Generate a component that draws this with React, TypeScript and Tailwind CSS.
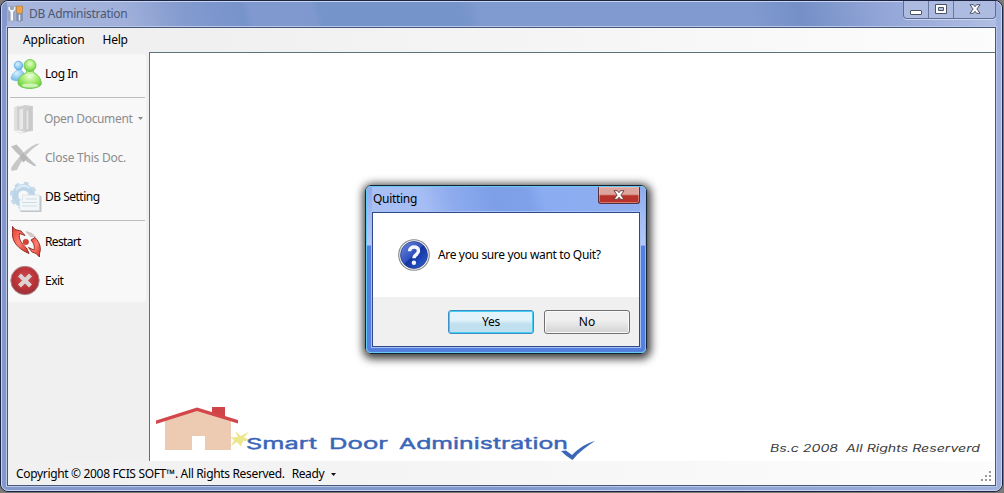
import type { ReactNode } from "react";

function AppIcon() {
  return (
    <svg width="17" height="17" viewBox="0 0 17 17" className="shrink-0">
      <path d="M.5 1h8v15h-8z" fill="#8d99b5" opacity=".55" />
      <path d="M9 1h7v15H9z" fill="#6f83b0" opacity=".6" />
      <path d="M1 1v3.500L3.200 7v9h3.300V7L8.700 4.500V1L6.500 2v2.500h-3V2z" fill="#f6f8fb" stroke="#8690a8" strokeWidth=".6" />
      <path d="M9.500 1h6v6l-2 2h-2l-2-2z" fill="#f0a244" stroke="#b07a3c" strokeWidth=".6" />
      <path d="M11.200 9h2.600v7h-2.600z" fill="#e8edf6" stroke="#56657f" strokeWidth=".6" />
    </svg>
  );
}

function UsersIcon() {
  return (
    <svg width="32" height="32" viewBox="0 0 32 32">
      <defs>
        <radialGradient id="green" cx=".5" cy=".35" r=".7">
          <stop offset="0" stopColor="#e8fdd0" />
          <stop offset=".5" stopColor="#a4ea70" />
          <stop offset="1" stopColor="#62c93a" />
        </radialGradient>
        <radialGradient id="sky" cx=".4" cy=".35" r=".75">
          <stop offset="0" stopColor="#d8f1ff" />
          <stop offset="1" stopColor="#5aaee4" />
        </radialGradient>
      </defs>
      <path d="M1 21c0-4 2-6 5-8l1-2h4l1 2c2 1 3 4 3 8-4 2-10 3-14 0z" fill="url(#sky)" stroke="#7dbde6" strokeWidth=".6" />
      <circle cx="8.500" cy="7.500" r="4.300" fill="url(#sky)" stroke="#4a9ad6" strokeWidth=".6" />
      <path d="M8 26c0-6 3-9 8-11l1-3h6l1 3c5 2 7 6 7.500 11-3 6-20.500 6-23.500 0z" fill="url(#green)" stroke="#5fbe3b" strokeWidth=".7" />
      <path d="M15 16l5 5 5-5z" fill="#e4fcd0" opacity=".7" />
      <circle cx="20" cy="7.500" r="6" fill="url(#green)" stroke="#5cc038" strokeWidth=".7" />
      <ellipse cx="20" cy="27.500" rx="8.500" ry="2" fill="#eaffd8" opacity=".7" />
    </svg>
  );
}

function FolderIcon() {
  return (
    <svg width="32" height="32" viewBox="0 0 32 32">
      <path d="M4 4.500 9 2v25l-5 1z" fill="#e0e0e0" />
      <path d="M7 4l8-2 8 1v25l-8 1-8-2z" fill="#d0d0d0" />
      <path d="M9.500 7l3.500-1.500V26l-3.500 1z" fill="#e9e9e9" />
      <path d="M15 7l7-4v24l-7 2z" fill="#cacaca" />
      <path d="M16.500 8l1.800-1v19l-1.800.8z" fill="#e8e8e8" />
      <path d="M4 27.500l7 2 5-1v1.500l-6 .5z" fill="#e2e2e2" />
    </svg>
  );
}

function CrossIcon() {
  return (
    <svg width="32" height="32" viewBox="0 0 32 32">
      <path d="M1 4.500 6.500 2.500c5 5 11 13 20 21l-2.500.500C15 19 7 12 1 4.500z" fill="#c0c0c0" />
      <path d="M30 1.500C20 8 13 15 7 28l-5.500 1-.5-3C8 15 17 6 26 2z" fill="#c8c8c8" />
      <path d="M13 11l4.500 5-4 4.500-4-5z" fill="#b6b6b6" />
    </svg>
  );
}

function SettingIcon() {
  return (
    <svg width="32" height="32" viewBox="0 0 32 32">
      <circle cx="13.500" cy="14.500" r="8.600" fill="none" stroke="#bcd5e8" strokeWidth="6" />
      <circle cx="13.500" cy="14.500" r="12" fill="none" stroke="#c3daeb" strokeWidth="3.400" strokeDasharray="4.700 4.720" />
      <circle cx="13.500" cy="14.500" r="5.500" fill="#f6f8fa" stroke="#a5c3da" strokeWidth=".6" />
      <path d="M6 9c4-5 9-5 14-2" stroke="#dcebf5" strokeWidth="2" fill="none" />
      <path d="M14 15h17.500v16H10.500V21H14z" fill="#c0c7cb" />
      <path d="M12.500 14h17v15.500h-20V19h3z" fill="#f2f6f8" stroke="#d0dae1" strokeWidth=".6" />
      <path d="M16 18h11M12 21.500h15M12 25h15" stroke="#cfdce5" strokeWidth="1" />
    </svg>
  );
}

function RestartIcon() {
  return (
    <svg width="32" height="32" viewBox="0 0 32 32">
      <defs>
        <linearGradient id="red" x1="0" y1="0" x2="1" y2="1">
          <stop offset="0" stopColor="#e6382c" />
          <stop offset=".5" stopColor="#ff8070" />
          <stop offset="1" stopColor="#d42a20" />
        </linearGradient>
      </defs>
      <path d="M2.500.5 5 3.500l6 1.500 4 4.500-5.500-2C8.500 13 11 17 16.500 22l2.500 5.500C9 23.500 1.500 16 2.500 6.500z" fill="url(#red)" stroke="#7b1512" strokeWidth=".8" />
      <path d="M25 11.500c5 5 6.500 11 4.500 16V31l-3.500-3.500-4-1.500-3.500-4.500 5.500 2.500c1-4-.5-7-3-10z" fill="url(#red)" stroke="#7b1512" strokeWidth=".8" />
      <path d="M16 5.500l6 2 3.500 3.500-5-.5z" fill="#dccdca" stroke="#a78c88" strokeWidth=".4" />
      <circle cx="15.800" cy="16" r="2.800" fill="#dc4234" stroke="#a03026" strokeWidth=".5" />
    </svg>
  );
}

function ExitIcon() {
  return (
    <svg width="32" height="32" viewBox="0 0 32 32">
      <defs>
        <radialGradient id="exit" cx=".5" cy=".4" r=".6">
          <stop offset="0" stopColor="#cf4a4e" />
          <stop offset=".65" stopColor="#b83238" />
          <stop offset="1" stopColor="#93343a" />
        </radialGradient>
      </defs>
      <circle cx="15" cy="15.500" r="14.200" fill="url(#exit)" stroke="#b58a8c" strokeWidth="1" />
      <path d="M9.500 10l11 11M20.500 10l-11 11" stroke="#dcd3d3" strokeWidth="4.200" />
    </svg>
  );
}

function QuestionIcon() {
  return (
    <svg width="32" height="32" viewBox="0 0 32 32" className="shrink-0">
      <defs>
        <linearGradient id="ask" x1="0" y1="0" x2="1" y2="1">
          <stop offset="0" stopColor="#6e8be0" />
          <stop offset=".48" stopColor="#2f50bd" />
          <stop offset=".5" stopColor="#1334a0" />
          <stop offset="1" stopColor="#2f62d6" />
        </linearGradient>
      </defs>
      <circle cx="16" cy="16" r="15.300" fill="#f2f2f2" stroke="#85888f" strokeWidth="1.100" />
      <circle cx="16" cy="16" r="13.500" fill="url(#ask)" stroke="#26377f" strokeWidth=".7" />
      <path d="M11.500 12.200C11.700 6.500 20.500 6.800 20.500 11.800c0 3.800-4.600 3.700-4.600 7.500" stroke="#f4f6fb" strokeWidth="3.500" fill="none" />
      <circle cx="15.900" cy="23.700" r="2.200" fill="#f4f6fb" />
    </svg>
  );
}

function CloseGlyph({ edge }: { edge: string }) {
  return (
    <svg width="12" height="10" viewBox="0 0 12 10">
      <path d="M1 .7h3.400L6 2.700 7.600.7H11L7.900 5 11 9.300H7.600L6 7.300l-1.600 2H1L4.100 5z" fill="#fff" stroke={edge} strokeWidth="1" />
    </svg>
  );
}

function Caret({ color }: { color: string }) {
  return (
    <svg width="5" height="3" viewBox="0 0 5 3" className="shrink-0">
      <path d="M0 0h5L2.500 3z" fill={color} />
    </svg>
  );
}

function ToolRow({ icon, children }: { icon: ReactNode; children: ReactNode }) {
  return (
    <div className="flex h-[39px] items-center pl-[2px] whitespace-nowrap">
      <span className="w-[34px] shrink-0">{icon}</span>
      {children}
    </div>
  );
}

function Separator() {
  return (
    <div className="h-[6px] pt-[4px] pl-[2px]">
      <div className="h-px w-[135px] bg-[#bdbdbd]" />
    </div>
  );
}

function Sidebar() {
  return (
    <aside className="w-[141px] shrink-0 pt-[2px]">
      <div className="h-[248px] w-[138px] rounded-r-[3px] bg-[#f8f8f8]">
        <ToolRow icon={<UsersIcon />}><span className="pl-px tracking-[-0.45px]">Log In</span></ToolRow>
        <Separator />
        <ToolRow icon={<FolderIcon />}>
          <span className="mr-[6px] tracking-[-0.35px] text-[#8c8c8c]">Open Document</span>
          <Caret color="#8c8c8c" />
        </ToolRow>
        <ToolRow icon={<CrossIcon />}><span className="pl-px tracking-[-0.25px] text-[#8c8c8c]">Close This Doc.</span></ToolRow>
        <ToolRow icon={<SettingIcon />}><span className="pl-px tracking-[-0.5px]">DB Setting</span></ToolRow>
        <Separator />
        <ToolRow icon={<RestartIcon />}><span className="pl-px tracking-[-0.65px]">Restart</span></ToolRow>
        <ToolRow icon={<ExitIcon />}><span className="pl-px tracking-[-0.5px]">Exit</span></ToolRow>
      </div>
    </aside>
  );
}

function Brand() {
  return (
    <svg width="450" height="60" viewBox="155 401 450 60">
      <path d="M165 419l32-9 34 9v31h-26v-14h-13v14h-27z" fill="#eccbb2" />
      <path d="M212 407h13v12l-13-4z" fill="#cf4449" />
      <path d="M156 420.500 197 407.500l41 12.500v3.500L197 411 156 424z" fill="#d3474b" />
      <path d="M230 437.500l8-.5-3-6 6 5 8-4.500-5 6 7 3-8 .5-2 5.500-4-4.500-6 4 3-6z" fill="#ece78c" />
      <g fontFamily="Inter, sans-serif" fontSize="15" fill="#3a66b8" stroke="#3a66b8" strokeWidth=".4">
        <text x="246" y="448.500" textLength="71" lengthAdjust="spacingAndGlyphs">Smart</text>
        <text x="329" y="448.500" textLength="59" lengthAdjust="spacingAndGlyphs">Door</text>
        <text x="399" y="448.500" textLength="169" lengthAdjust="spacingAndGlyphs">Administration</text>
      </g>
      <path d="M561 451l5-.5 6 4.500c7-7 14-11.500 23-14-8 5-16 11-22.500 19-4-2.500-8-5.500-11.500-9z" fill="#3a66b8" />
    </svg>
  );
}

function Rights() {
  return (
    <svg width="216" height="16" viewBox="768 441 216 16">
      <text x="770" y="451.500" fontFamily="Inter, sans-serif" fontStyle="italic" fontSize="10.300" fill="#3c3c3c" textLength="210" lengthAdjust="spacingAndGlyphs">
        {"Bs.c 2008 \u00a0All Rights Reserverd"}
      </text>
    </svg>
  );
}

function WindowControls() {
  return (
    <div className="-mt-px flex h-[18px] w-[93px] rounded-b-[4px] border border-t-0 border-[#5f6c93] bg-[#adbbe0] shadow-[0_1px_0_#c9d4ee]">
      <div className="flex w-[25px] items-end justify-center border-r border-[#6a789e] pb-[3px]">
        <div className="h-[5px] w-[12px] rounded-[1px] border border-[#4d5263] bg-white" />
      </div>
      <div className="flex w-[25px] items-center justify-center border-r border-[#6a789e] pb-[2px]">
        <svg width="12" height="10" viewBox="0 0 12 10">
          <path d="M.5.500h11v9H.5z" fill="#fff" stroke="#4d5263" />
          <path d="M3.500 3.500h5v3h-5z" fill="#b4c0dc" stroke="#4d5263" />
        </svg>
      </div>
      <div className="flex flex-1 items-center justify-center pb-[2px]"><CloseGlyph edge="#4d5263" /></div>
    </div>
  );
}

function QuitDialog() {
  return (
    <div className="absolute top-[185px] left-[365px] h-[169px] w-[282px] rounded-[6px] border border-[#152334] shadow-[1px_2px_9px_3px_rgba(0,0,0,0.75)]">
      <div className="flex h-full flex-col rounded-[5px] border border-[#65c9f5] bg-linear-to-b from-[#8eabed] via-[#b4c9f7] via-35% to-[#5480df] to-36% px-[5px] pb-[5px]">
        <div className="flex h-[25px] shrink-0 justify-between bg-[linear-gradient(75deg,#a9c0f4_0%,#a5bdf4_20%,#8fabee_30%,#85a5ec_38%,#7d9fe8_46%,#7fa1ea_58%,#8bacf1_64%,#90aef1_100%)]">
          <div className="pt-[3px] pl-px tracking-[-0.3px] text-black">Quitting</div>
          <div className="flex h-[17px] w-[42px] items-center justify-center rounded-b-[3px] border border-t-0 border-[#54313e] bg-linear-to-b from-[#dca69f] from-45% to-[#b8332c] to-55% pb-px shadow-[inset_0_0_0_1px_rgba(255,200,190,0.45)]">
            <CloseGlyph edge="#6e4548" />
          </div>
        </div>
        <div className="flex flex-1 flex-col border border-[#2e4a89] bg-white shadow-[0_0_0_1px_#a5c0f5]">
          <div className="flex flex-1 items-center pl-[25px]">
            <QuestionIcon />
            <span className="pl-[8px] tracking-[-0.35px]">Are you sure you want to Quit?</span>
          </div>
          <div className="flex h-[49px] justify-end gap-[10px] bg-[#f0f0f0] pt-[13px] pr-[9px]">
            <button className="h-[24px] w-[86px] rounded-[3px] border border-[#3c8fc2] bg-linear-to-b from-[#e3f3fb] from-40% to-[#c0dfef] to-60% pb-px tracking-[-0.3px] shadow-[inset_0_0_0_1px_#46cdf5]">Yes</button>
            <button className="h-[24px] w-[86px] rounded-[3px] border border-[#707070] bg-linear-to-b from-[#f0f0f0] from-40% to-[#d2d2d2] pb-px shadow-[inset_0_0_0_1px_#fafafa]">No</button>
          </div>
        </div>
      </div>
    </div>
  );
}

export default function App() {
  return (
    <div className="h-[493px] w-[1004px] overflow-hidden bg-[#7c7a76] font-['Noto_Sans',sans-serif] text-[12px] leading-[18px] text-black">
      <div className="relative h-[492px] w-[1003px] rounded-[8px] border border-[#1c2545] bg-[#7d93c8]">
        <div className="flex h-full flex-col rounded-[7px] border border-[#c8d3ed] bg-linear-to-r from-[#8498cc] via-[#7e98cd] to-[#9fb0dc] px-[5px] pb-[4px]">
          <header className="flex h-[25px] shrink-0 justify-between bg-[linear-gradient(75deg,#a9b7dc_0%,#a0b0da_12%,#849bcf_18%,#7693ca_24%,#809acf_25%,#7f99ce_31%,#7594c9_32%,#7594c9_46%,#809bd0_48%,#819bd0_75%,#7490c6_80%,#92a5d7_88%,#b3bfe3_100%)]">
            <div className="flex gap-[5px] pt-[3px]">
              <AppIcon />
              <span className="tracking-[-0.28px] text-[#4b5872]">DB Administration</span>
            </div>
            <WindowControls />
          </header>
          <div className="flex flex-1 flex-col border border-[#46587a] bg-[#f0f0f0] shadow-[0_0_0_1px_#bac7e6]">
            <nav className="flex h-[24px] shrink-0 gap-[18px] bg-linear-to-r from-[#f0f0f0] from-20% to-[#fcfcfc] pt-[3px] pl-[15px]">
              <span className="tracking-[-0.15px]">Application</span>
              <span className="tracking-[-0.3px]">Help</span>
            </nav>
            <div className="flex h-[409px] shrink-0">
              <Sidebar />
              <main className="flex flex-1 items-end justify-between border-t border-l border-[#5b7378] bg-white pl-[5px]">
                <Brand />
                <div className="pr-[11px] pb-[4px]"><Rights /></div>
              </main>
            </div>
            <footer className="flex flex-1 items-center justify-between bg-linear-to-r from-[#f0f0f0] to-[#fcfcfc] pl-[8px]">
              <div className="flex items-center pt-[2px]">
                <span className="tracking-[-0.33px]">Copyright © 2008 FCIS SOFT™. All Rights Reserved.</span>
                <span className="mr-[7px] ml-[7px] tracking-[-0.4px]">Ready</span>
                <Caret color="#111" />
              </div>
              <svg width="12" height="12" viewBox="0 0 12 12" className="mt-[8px] mr-[2px]">
                <path d="M8 0h2v2H8zM8 4h2v2H8zM4 4h2v2H4zM8 8h2v2H8zM4 8h2v2H4zM0 8h2v2H0z" fill="#999" />
              </svg>
            </footer>
          </div>
        </div>
      </div>
      <QuitDialog />
    </div>
  );
}
